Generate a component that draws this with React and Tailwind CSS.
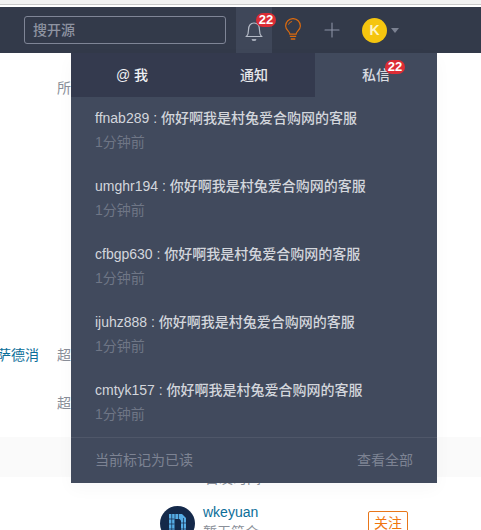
import { Plus } from "lucide-react";

const messages = [
  { name: "ffnab289" },
  { name: "umghr194" },
  { name: "cfbgp630" },
  { name: "ijuhz888" },
  { name: "cmtyk157" },
];

function CountBadge() {
  return (
    <span className="absolute h-[14px] w-[20px] rounded-full bg-[#dc2c35] text-center text-[13px] leading-[14px] font-bold text-white">
      22
    </span>
  );
}

function Header() {
  return (
    <header className="flex h-[46px] items-center bg-[#333a4a] pl-[24px]">
      <div className="flex h-[28px] w-[202px] items-center rounded-[3px] border border-[#7f8596] px-[8px] text-[14px] font-medium text-[#8e93a1]">
        搜开源
      </div>
      <div className="relative ml-[10px] flex h-[46px] w-[36px] items-center justify-center bg-[#3f4759]">
        <svg width="20" height="24" viewBox="0 0 20 24" fill="none" className="mt-[1px]">
          <path d="M2.500 17.500c1.500-1.500 2-3 2-6.500 0-4 2-7 5.500-7s5.500 3 5.500 7c0 3.500.5 5 2 6.500z" stroke="#b4bac6" strokeWidth="1.200" />
          <path d="M7.500 20h5l-1 2h-3z" fill="#a3a9b6" />
        </svg>
        <div className="absolute top-[6px] left-[20px] h-[14px] w-[20px]">
          <CountBadge />
        </div>
      </div>
      <svg width="18" height="24" viewBox="0 0 20 26" fill="none" className="ml-[12px]">
        <path d="M6.500 17.500c0-3-4.700-4.500-4.700-9a8 8 0 0 1 16.400 0c0 4.500-4.700 6-4.700 9z" stroke="#dc6a0e" strokeWidth="1.300" />
        <path d="M5 7a5 5 0 0 1 4-3.500" stroke="#dc6a0e" strokeWidth="1.100" />
        <path d="M6.500 20h7M7.500 23h5" stroke="#dc6a0e" strokeWidth="1.500" />
      </svg>
      <Plus size={24} strokeWidth={1.100} color="#8b92a5" className="ml-[18px]" />
      <div className="ml-[18px] flex h-[25px] w-[25px] items-center justify-center rounded-full bg-[#f5c50f] text-[14px] font-bold text-[#fdf3c4]">
        K
      </div>
      <div className="ml-[4px] h-0 w-0 border-x-[4px] border-t-[5px] border-x-transparent border-t-[#7b8191]" />
    </header>
  );
}

function MessagesMenu() {
  return (
    <div className="absolute top-[53px] left-[71px] w-[366px] bg-[#414a5d] shadow-[0_6px_16px_rgba(30,40,60,0.03)]">
      <div className="grid h-[44px] grid-cols-3 text-[14px] font-medium">
        <div className="flex items-center justify-center bg-[#343a4e] text-[#f1f2f4]">@ 我</div>
        <div className="flex items-center justify-center bg-[#343a4e] text-[#e4e6ea]">通知</div>
        <div className="relative flex items-center justify-center text-[#d8dbe1]">
          私信
          <div className="absolute top-[7px] left-[70px] h-[14px] w-[20px]">
            <CountBadge />
          </div>
        </div>
      </div>
      <ul className="h-[340px] px-[24px]">
        {messages.map((m) => (
          <li key={m.name} className="h-[68px] pt-[11px]">
            <p className="h-[20px] text-[14px] leading-[20px] font-medium text-[#d3d6dc]">
              {m.name} : 你好啊我是村兔爱合购网的客服
            </p>
            <p className="mt-[4px] h-[20px] text-[14px] leading-[20px] text-[#6f7686]">1分钟前</p>
          </li>
        ))}
      </ul>
      <div className="flex h-[46px] items-center justify-between border-t border-[#4f5769] px-[24px] text-[14px] text-[#7d8393]">
        <span>当前标记为已读</span>
        <span>查看全部</span>
      </div>
    </div>
  );
}

function UserLogo() {
  return (
    <svg width="35" height="35" viewBox="0 0 35 35" className="shrink-0">
      <circle cx="17.500" cy="17.500" r="17.500" fill="#14294a" />
      {/* pixel block "D" */}
      <path d="M9 8h13l4 4v18H9z" fill="#56ade6" />
      <path d="M14.500 13h5l1.500 1.500V30h-6.500z" fill="#14294a" />
      <path d="M9 13h5.500M9 18h5.500M9 23h5.500M21 17h5M21 23h5M11.700 8v22M15 8v5M18.500 8v5M23.500 12v18" stroke="#14294a" strokeWidth="0.700" />
    </svg>
  );
}

function BackgroundPage() {
  return (
    <div className="text-[14px] text-[#8a8f99]">
      <div className="h-[292px] pt-[25px] pl-[57px] leading-[20px]">所</div>
      <div className="flex h-[48px] items-start leading-[20px]">
        <span className="w-[57px] -translate-x-[3px] whitespace-nowrap text-[#0b6e99]">萨德消</span>
        <span>超</span>
      </div>
      <div className="h-[44px] pl-[57px] leading-[20px]">超</div>
      <div className="h-[40px] bg-[#fafafa]" />
      <div className="relative pl-[160px]">
        <p className="absolute -top-[9px] left-[205px] leading-[20px] whitespace-nowrap">首发时间</p>
        <div className="flex items-start pt-[29px]">
          <UserLogo />
          <div className="ml-[8px] w-[165px] leading-[20px]">
            <p className="-mt-[4px] text-[#0b6e99]">wkeyuan</p>
            <p>暂无简介</p>
          </div>
          <div className="mt-[5px] flex h-[24px] w-[40px] items-center justify-center rounded-[2px] border border-[#e8761a] bg-white text-[#f0760f]">
            关注
          </div>
        </div>
      </div>
    </div>
  );
}

export default function App() {
  return (
    <div className="relative h-[530px] w-[481px] overflow-hidden bg-white font-['Liberation_Sans','Noto_Sans_CJK_SC',sans-serif]">
      <div className="h-[5px] border-b border-[#c9c9c9] bg-[#f1f1f1]" />
      <div className="h-[2px] bg-white" />
      <Header />
      <div className="absolute top-[53px] right-0 left-0">
        <BackgroundPage />
      </div>
      <MessagesMenu />
    </div>
  );
}
